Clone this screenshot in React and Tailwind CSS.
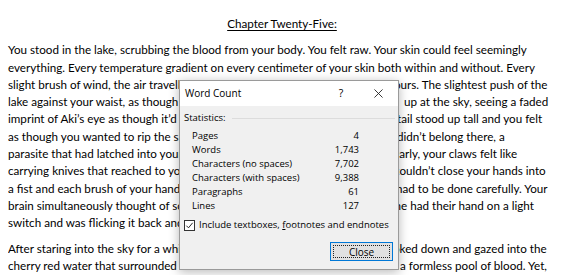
import React from 'react';

// Lines of the first paragraph; left part runs under the dialog, right part shows past it
const paragraphOne = [
    { text: 'You stood in the lake, scrubbing the blood from your body. You felt raw. Your skin could feel seemingly' },
    { text: 'everything. Every temperature gradient on every centimeter of your skin both within and without. Every' },
    { left: 'slight brush of wind, the air travelling across', right: 'ours. The slightest push of the', leftBox: 'w-[386px]' },
    { left: 'lake against your waist, as though you looked', right: 'up at the sky, seeing a faded', leftBox: 'w-[396px]' },
    { left: 'imprint of Aki’s eye as though it’d been burned', right: 'tail stood up tall and you felt', leftBox: 'w-[389px]' },
    { left: 'as though you wanted to rip the skin off', right: 'didn’t belong there, a', leftBox: 'w-[389px]' },
    { left: 'parasite that had latched into your flesh', right: 'early, your claws felt like', leftBox: 'w-[385px]' },
    { left: 'carrying knives that reached to your palms', right: 'couldn’t close your hands into', leftBox: 'w-[386px]' },
    { left: 'a fist and each brush of your hand', right: 'had to be done carefully. Your', leftBox: 'w-[388px]' },
    { left: 'brain simultaneously thought of someone', right: 'one had their hand on a light', leftBox: 'w-[380px]' },
    { text: 'switch and was flicking it back and forth over and over.' },
];

const paragraphTwo = [
    { left: 'After staring into the sky for a while, you loo', right: 'oked down and gazed into the', leftBox: 'w-[385px]' },
    { left: 'cherry red water that surrounded', right: 'a formless pool of blood. Yet,', leftBox: 'w-[392px]' },
];

const Line = ({ line }) => {
    if (line.text) {
        return <div className="h-[17.3px] leading-[17.3px] whitespace-nowrap">{line.text}</div>;
    }
    return (
        <div className="flex h-[17.3px] leading-[17.3px] whitespace-nowrap">
            <span className={`${line.leftBox} shrink-0 overflow-hidden`}>{line.left}</span>
            <span>{line.right}</span>
        </div>
    );
};

const stats = [
    ['Pages', '4'],
    ['Words', '1,743'],
    ['Characters (no spaces)', '7,702'],
    ['Characters (with spaces)', '9,388'],
    ['Paragraphs', '61'],
    ['Lines', '127'],
];

const WordCountDialog = () => (
    <div
        className="absolute left-[179px] top-[80px] w-[220px] h-[190px] flex flex-col border border-[#9a9a9a] bg-[#f0f0f0] shadow-[0_2px_10px_rgba(0,0,0,0.28)] text-black"
        style={{ fontFamily: '"Open Sans", "Noto Sans", sans-serif' }}
    >
        {/* 타이틀 바 */}
        <div className="h-[25px] bg-white flex items-center pl-[5px] text-[10px]">
            <span className="flex-1">Word Count</span>
            <span className="w-[14px] text-center mr-[26px] text-[10.5px]">?</span>
            <svg className="w-[9px] h-[9px] mr-[15px]" viewBox="0 0 10 10" fill="none" stroke="#222" strokeWidth="1">
                <path d="M0.5 0.5l9 9M9.5 0.5l-9 9" />
            </svg>
        </div>

        {/* 통계 */}
        <div className="flex-1 flex flex-col px-[4px] text-[9.5px] leading-[14px]">
            <div className="flex items-center mt-[5px]">
                <span>Statistics:</span>
                <div className="flex-1 h-px bg-[#dcdcdc] ml-[6px] mr-[-1px]" />
            </div>
            <div className="mt-[4px] pl-[8px] pr-[35px]">
                {stats.map(([label, value]) => (
                    <div key={label} className="flex justify-between">
                        <span>{label}</span>
                        <span>{value}</span>
                    </div>
                ))}
            </div>
            <div className="flex items-center mt-[5px]">
                <div className="w-[11px] h-[11px] border border-[#333] bg-white flex items-center justify-center mr-[4px]">
                    <svg className="w-[9px] h-[9px]" viewBox="0 0 10 10" fill="none" stroke="#222" strokeWidth="1.1">
                        <path d="M1.5 5.2l2.4 2.4 4.6-5.6" />
                    </svg>
                </div>
                <span className="whitespace-nowrap">
                    Include textboxes, <span className="underline">f</span>ootnotes and endnotes
                </span>
            </div>
            <div className="flex justify-end mt-[10px] pr-[1px]">
                <button className="w-[63px] h-[19px] border border-[#0078d7] bg-[#e1e1e1] p-[2px]">
                    <div className="h-full border border-dotted border-[#222] flex items-center justify-center text-[10px]">
                        Close
                    </div>
                </button>
            </div>
        </div>
    </div>
);

export default function App() {
    return (
        <div className="relative w-[564px] h-[275px] overflow-hidden bg-white">
            <div
                className="pt-[15px] pl-[8px] text-[11.65px] text-black"
                style={{ fontFamily: 'Lato, "Open Sans", sans-serif' }}
            >
                <div className="h-[17.3px] leading-[17.3px] text-center pr-[8px] mb-[9px]">
                    <span className="underline underline-offset-2">Chapter Twenty-Five:</span>
                </div>
                <div className="mb-[8px]">
                    {paragraphOne.map((line, i) => (
                        <Line key={i} line={line} />
                    ))}
                </div>
                <div>
                    {paragraphTwo.map((line, i) => (
                        <Line key={i} line={line} />
                    ))}
                    <div className="h-[17.3px] leading-[17.3px] whitespace-nowrap">
                        though the blood was no longer on you, the feeling of it remained.
                    </div>
                </div>
            </div>
            <WordCountDialog />
        </div>
    );
}
